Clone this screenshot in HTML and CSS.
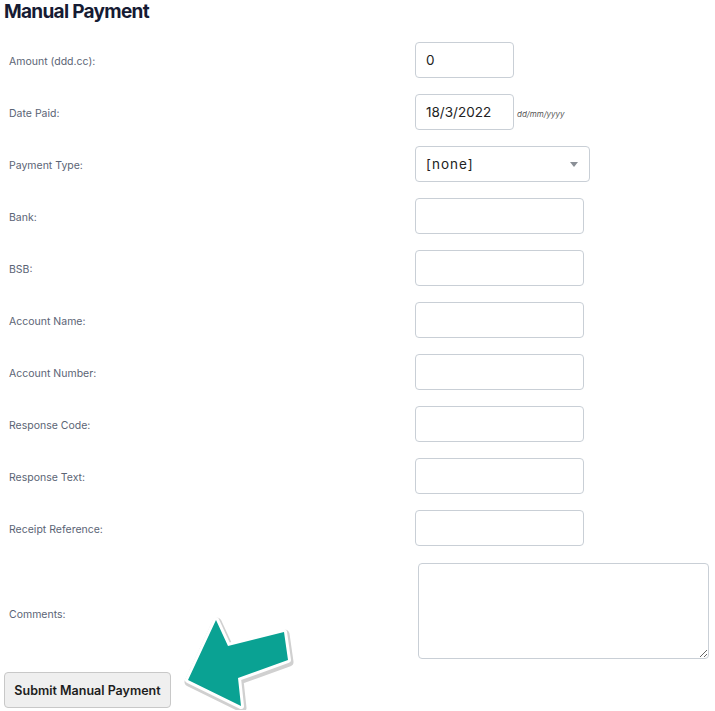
FILE: index.html
```html
<!DOCTYPE html>
<html>
<head>
<meta charset="utf-8">
<link rel="stylesheet" href="styles.css">
</head>
<body>
<div class="page">
  <h2 class="title">Manual Payment</h2>
  <form class="form">
    <div class="row"><label class="lbl">Amount (ddd.cc):</label><div class="field"><input class="inp short" type="text" value="0"></div></div>
    <div class="row"><label class="lbl">Date Paid:</label><div class="field"><input class="inp short" type="text" value="18/3/2022"><span class="hint">dd/mm/yyyy</span></div></div>
    <div class="row"><label class="lbl">Payment Type:</label><div class="field"><div class="select"><span>[none]</span><span class="caret"></span></div></div></div>
    <div class="row"><label class="lbl">Bank:</label><div class="field"><input class="inp" type="text"></div></div>
    <div class="row"><label class="lbl">BSB:</label><div class="field"><input class="inp" type="text"></div></div>
    <div class="row"><label class="lbl">Account Name:</label><div class="field"><input class="inp" type="text"></div></div>
    <div class="row"><label class="lbl">Account Number:</label><div class="field"><input class="inp" type="text"></div></div>
    <div class="row"><label class="lbl">Response Code:</label><div class="field"><input class="inp" type="text"></div></div>
    <div class="row"><label class="lbl">Response Text:</label><div class="field"><input class="inp" type="text"></div></div>
    <div class="row"><label class="lbl">Receipt Reference:</label><div class="field"><input class="inp" type="text"></div></div>
    <div class="row comments"><label class="lbl">Comments:</label><div class="field"><textarea class="ta"></textarea></div></div>
  </form>
  <div class="actions"><button class="btn" type="button">Submit Manual Payment</button></div>
  <svg class="arrow" width="130" height="100" viewBox="0 0 130 100" xmlns="http://www.w3.org/2000/svg">
    <polygon points="12,70 40,10 52,36 108,22 112,50 62,68 65,96" fill="#e4e4e4" stroke="#d0d0d0" stroke-width="9" stroke-linejoin="round" transform="translate(1,2)"/>
    <polygon points="12,70 40,10 52,36 108,22 112,50 62,68 65,96" fill="#ffffff" stroke="#ffffff" stroke-width="6" stroke-linejoin="round"/>
    <polygon points="12,70 40,10 52,36 108,22 112,50 62,68 65,96" fill="#0aa293"/>
  </svg>
</div>
</body>
</html>
```

FILE: styles.css
```css
html, body {
  margin: 0;
  padding: 0;
  background: #ffffff;
}
body {
  font-family: Inter, "Noto Sans", sans-serif;
  color: #222;
}
.page {
  position: relative;
  width: 715px;
  height: 711px;
  overflow: hidden;
}
.title {
  margin: 0;
  padding: 1px 0 0 4px;
  height: 33px;
  font-size: 19px;
  line-height: 21px;
  font-weight: 700;
  color: #161b33;
  letter-spacing: -0.7px;
}
.form {
  display: flex;
  flex-direction: column;
  padding-left: 9px;
}
.row {
  display: grid;
  grid-template-columns: 406px 1fr;
  align-items: center;
  height: 52px;
}
.lbl {
  font-size: 10.5px;
  color: #5b6475;
  margin-top: 2px;
}
.field {
  display: flex;
  align-items: center;
}
.inp {
  box-sizing: border-box;
  width: 169px;
  height: 36px;
  border: 1px solid #c9cfd6;
  border-radius: 4px;
  padding: 0 10px;
  font-family: Inter, "Noto Sans", sans-serif;
  font-size: 13.5px;
  color: #222;
  background: #fff;
  outline: none;
}
.inp.short {
  width: 99px;
}
.hint {
  margin-left: 3px;
  margin-top: 4px;
  font-size: 8px;
  font-style: italic;
  color: #555;
}
.select {
  box-sizing: border-box;
  width: 175px;
  height: 36px;
  border: 1px solid #c9cfd6;
  border-radius: 4px;
  padding: 0 10px;
  display: flex;
  align-items: center;
  justify-content: space-between;
  font-size: 13.5px;
  letter-spacing: 1px;
  color: #222;
}
.caret {
  width: 0;
  height: 0;
  border-left: 4px solid transparent;
  border-right: 4px solid transparent;
  border-top: 5px solid #8a8f96;
  margin-right: 1px;
}
.comments {
  height: 96px;
  margin-top: 9px;
  align-items: center;
}
.comments .field {
  padding-left: 3px;
}
.ta {
  box-sizing: border-box;
  width: 291px;
  height: 96px;
  border: 1px solid #c9cfd6;
  border-radius: 4px;
  resize: vertical;
  font-family: Inter, sans-serif;
  display: block;
}
.comments .lbl {
  margin-top: 6px;
}
.actions {
  padding: 13px 0 0 4px;
}
.btn {
  box-sizing: border-box;
  width: 167px;
  height: 36px;
  background: #efefef;
  border: 1px solid #c8c8c8;
  border-radius: 4px;
  font-family: Inter, "Noto Sans", sans-serif;
  font-weight: 600;
  font-size: 12.5px;
  color: #1d1d1d;
  padding: 0;
  display: block;
}
.arrow {
  position: absolute;
  left: 176px;
  top: 610px;
}
```
